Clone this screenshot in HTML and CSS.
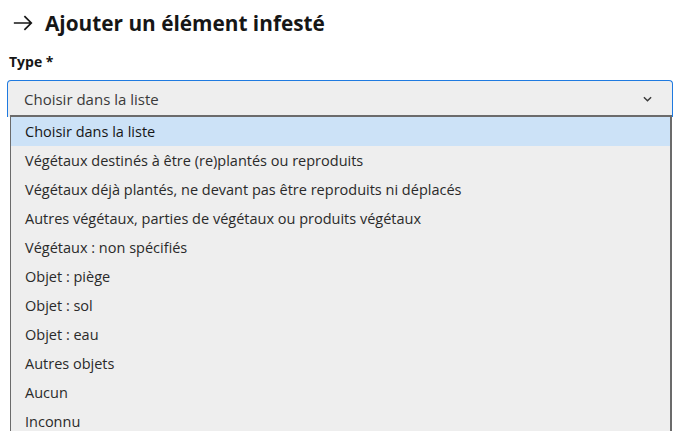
FILE: index.html
```html
<!DOCTYPE html>
<html lang="fr">
<head>
<meta charset="utf-8">
<link rel="stylesheet" href="styles.css">
</head>
<body>
<main class="page">
  <h1 class="title">
    <svg class="arrow" viewBox="0 0 24 24" width="22" height="22" aria-hidden="true"><path d="M2 12h19M13.5 4.5L21 12l-7.5 7.5" fill="none" stroke="#161616" stroke-width="1.9"/></svg>
    <span>Ajouter un élément infesté</span>
  </h1>
  <div class="field">
    <label class="label">Type *</label>
    <div class="select-wrap">
      <div class="select">
        <span>Choisir dans la liste</span>
        <svg class="chev" viewBox="0 0 10 6" width="9" height="6" aria-hidden="true"><path d="M1 1l4 4 4-4" fill="none" stroke="#3a3a3a" stroke-width="1.6"/></svg>
      </div>
      <ul class="listbox">
        <li class="opt selected">Choisir dans la liste</li>
        <li class="opt">Végétaux destinés à être (re)plantés ou reproduits</li>
        <li class="opt">Végétaux déjà plantés, ne devant pas être reproduits ni déplacés</li>
        <li class="opt">Autres végétaux, parties de végétaux ou produits végétaux</li>
        <li class="opt">Végétaux : non spécifiés</li>
        <li class="opt">Objet : piège</li>
        <li class="opt">Objet : sol</li>
        <li class="opt">Objet : eau</li>
        <li class="opt">Autres objets</li>
        <li class="opt">Aucun</li>
        <li class="opt">Inconnu</li>
      </ul>
    </div>
  </div>
</main>
</body>
</html>
```
FILE: styles.css
```css
html, body { margin: 0; padding: 0; background: #fff; }
body { font-family: "Open Sans", "Noto Sans", sans-serif; color: #161616; overflow: hidden; height: 431px; }
.page { padding: 8px 6px 0 7px; }
.title { display: flex; align-items: center; gap: 11px; margin: 0 0 0 5px; font-size: 20.8px; font-weight: 700; line-height: 30px; }
.arrow { flex: none; }
.field { margin-top: 14px; }
.label { display: block; font-size: 14px; font-weight: 700; line-height: 20px; margin-left: 2px; }
.select-wrap { position: relative; margin-top: 8px; }
.select { display: flex; align-items: center; justify-content: space-between; height: 36px; padding: 0 20px 0 16px; background: #eeeeee; border: 1px solid #1f7ae0; border-bottom: none; border-radius: 4px 4px 0 0; font-size: 15px; color: #3a3a3a; }
.listbox { position: absolute; left: 3px; right: 1px; top: 35px; margin: 0; padding: 0; list-style: none; background: #eeeeee; border: 2px solid #6b6b6b; border-bottom: none; border-left-width: 1px; height: 320px; overflow: hidden; }
.opt { height: 29px; line-height: 30px; padding-left: 14px; font-size: 14.5px; color: #2a2a2a; white-space: nowrap; }
.opt.selected { background: #cce2f7; color: #161616; }
```
